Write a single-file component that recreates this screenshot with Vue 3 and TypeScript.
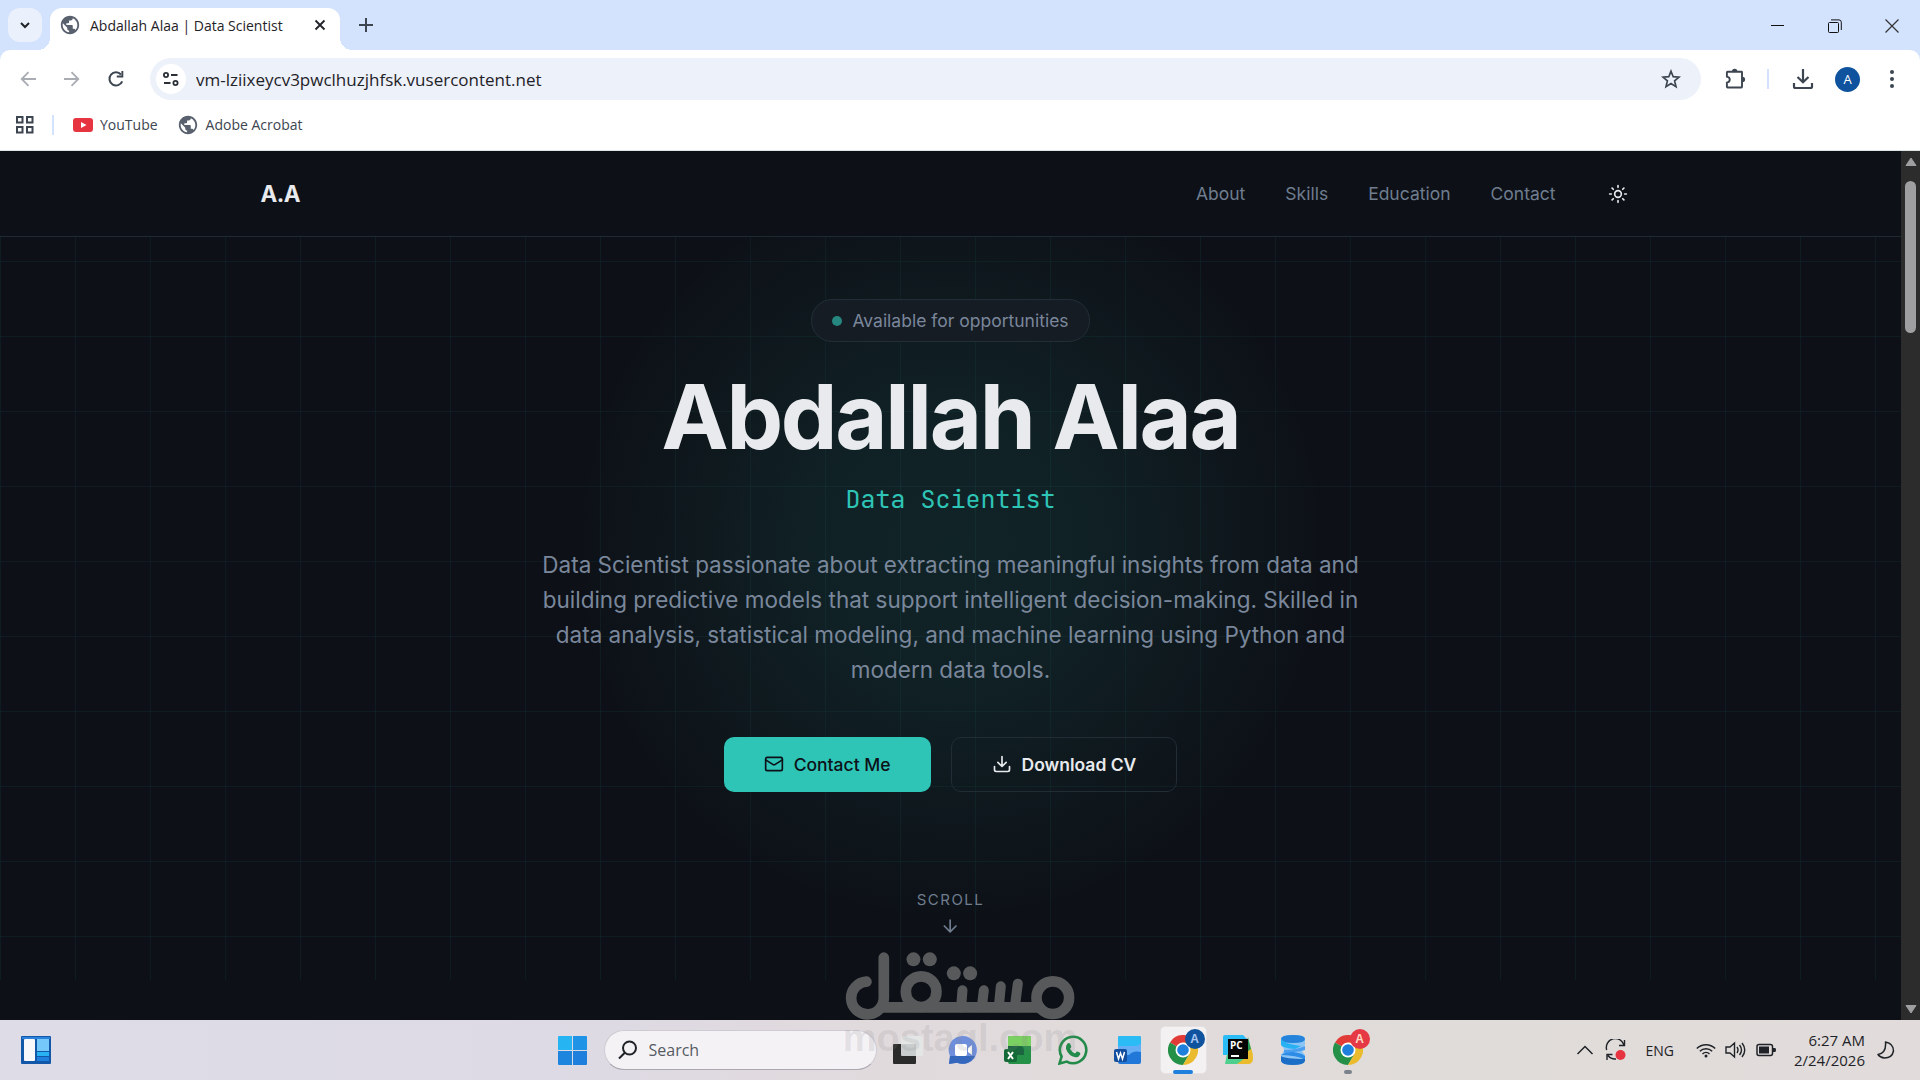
<script setup lang="ts">
import { ref } from 'vue'

const address = ref('vm-lziixeycv3pwclhuzjhfsk.vusercontent.net')
const query = ref('')
const links = ['About', 'Skills', 'Education', 'Contact']
const globe =
  'M12 2C6.48 2 2 6.48 2 12s4.48 10 10 10 10-4.48 10-10S17.52 2 12 2zm-1 17.93c-3.95-.49-7-3.85-7-7.93 0-.62.08-1.21.21-1.79L9 15v1c0 1.1.9 2 2 2v1.93zm6.9-2.54c-.26-.81-1-1.39-1.9-1.39h-1v-3c0-.55-.45-1-1-1H8v-2h2c.55 0 1-.45 1-1V7h2c1.1 0 2-.9 2-2v-.41c2.93 1.19 5 4.06 5 7.41 0 2.08-.8 3.97-2.1 5.39z'
const browsers = [
  { label: 'Chrome, work profile', badge: '#0f539f', letter: '#a9c6f0', active: true },
  { label: 'Chrome, personal profile', badge: '#e63946', letter: '#ffd9c4', active: false },
]
</script>

<template>
  <div class="desktop">
    <header class="browser">
      <div class="strip">
        <button class="tab-search" aria-label="Search tabs">
          <svg width="12" height="12" viewBox="0 0 12 12"><path d="M2 4l4 4 4-4" fill="none" stroke="#1f2328" stroke-width="2" /></svg>
        </button>
        <div class="tab">
          <svg class="fav" width="22" height="22" viewBox="0 0 24 24"><path :d="globe" fill="#59616e" /></svg>
          <span class="tab-title">Abdallah Alaa | Data Scientist</span>
          <button class="bare tab-close" aria-label="Close tab">
            <svg width="12" height="12" viewBox="0 0 12 12"><path d="M1.500 1.500l9 9M10.500 1.500l-9 9" stroke="#1f2328" stroke-width="1.800" /></svg>
          </button>
        </div>
        <button class="bare new-tab" aria-label="New tab">
          <svg width="14" height="14" viewBox="0 0 14 14"><path d="M7 0v14M0 7h14" stroke="#3c4550" stroke-width="2" /></svg>
        </button>
        <div class="window-buttons">
          <button class="bare" aria-label="Minimize"><svg width="14" height="14" viewBox="0 0 14 14"><path d="M0 6.500h13" stroke="#111" /></svg></button>
          <button class="bare" aria-label="Restore"><svg width="14" height="14" viewBox="0 0 14 14" fill="none" stroke="#111"><rect x=".5" y="3.500" width="10" height="10" rx="1" /><path d="M3 .9h8q2.300 0 2.300 2.300V11" /></svg></button>
          <button class="bare" aria-label="Close"><svg width="14" height="14" viewBox="0 0 14 14"><path d="M.5 .5l13 13M13.500 .5l-13 13" stroke="#333" stroke-width="1.200" /></svg></button>
        </div>
      </div>

      <div class="toolbar">
        <button class="bare tool" aria-label="Back"><svg width="16" height="16" viewBox="0 0 16 16" fill="none" stroke="#a9adb3" stroke-width="1.800"><path d="M16 8H2M8.500 1.200L1.700 8l6.800 6.800" /></svg></button>
        <button class="bare tool" aria-label="Forward"><svg width="16" height="16" viewBox="0 0 16 16" fill="none" stroke="#a9adb3" stroke-width="1.800"><path d="M0 8h14M7.500 1.200L14.300 8l-6.800 6.800" /></svg></button>
        <button class="bare tool" aria-label="Reload"><svg width="18" height="18" viewBox="0 0 18 18"><path d="M15.200 11.300A6.600 6.600 0 1 1 14 4.500" fill="none" stroke="#3c4550" stroke-width="2" /><path d="M16.300 1v6.500H9.800V5.600h4.600V1z" fill="#3c4550" /></svg></button>
        <div class="omnibox">
          <button class="site-info" aria-label="Site information"><svg width="18" height="18" viewBox="0 0 18 18" fill="none" stroke="#2b3038" stroke-width="1.800"><circle cx="4" cy="5" r="2.100" /><path d="M9 5h6.500M2 13h6.500" /><circle cx="13.500" cy="13" r="2.100" /></svg></button>
          <input v-model="address" class="address" aria-label="Address" spellcheck="false" />
          <button class="bare star" aria-label="Bookmark"><svg width="20" height="20" viewBox="0 0 20 20"><path d="M10 2.200l2.200 5.500 5.900.4-4.500 3.800 1.400 5.700-5-3.100-5 3.100 1.400-5.700-4.500-3.800 5.900-.4z" fill="none" stroke="#3c4550" stroke-width="1.700" /></svg></button>
        </div>
        <button class="bare tool ext" aria-label="Extensions"><svg width="22" height="22" viewBox="0 0 22 22"><path d="M3.500 3.700H17.500Q18 3.700 18 4.200V18.800Q18 19.500 17.300 19.500H3.600Q2.900 19.500 2.900 18.800V14.600C6.700 14 6.700 9.200 2.900 8.600V4.400Q2.900 3.700 3.500 3.700Z" fill="none" stroke="#3c4550" stroke-width="1.900" /><path d="M8 3.500a2.700 2.700 0 0 1 5.400 0zM18.400 8.700a2.700 2.700 0 0 1 0 5.400z" fill="#3c4550" /></svg></button>
        <i class="rule"></i>
        <button class="bare tool dl" aria-label="Downloads"><svg width="22" height="22" viewBox="0 0 22 22" fill="none" stroke="#3c4550" stroke-width="2.200"><path d="M11 1v13M5.500 9L11 14.300 16.500 9M2 15v3.500q0 1.500 1.500 1.500h15q1.500 0 1.500-1.500V15" /></svg></button>
        <button class="avatar" aria-label="Profile">A</button>
        <button class="bare tool menu" aria-label="Menu"><svg width="6" height="20" viewBox="0 0 6 20" fill="#3c4550"><circle cx="3" cy="3" r="2" /><circle cx="3" cy="10" r="2" /><circle cx="3" cy="17" r="2" /></svg></button>
      </div>

      <nav class="bookmarks" aria-label="Bookmarks">
        <button class="bare" aria-label="Apps"><svg width="20" height="20" viewBox="0 0 20 20" fill="none" stroke="#3c4550" stroke-width="2"><path d="M2 2h5.500v5.500H2zM12 2h5.500v5.500H12zM2 12h5.500v5.500H2zM12 12h5.500v5.500H12z" /></svg></button>
        <i class="rule"></i>
        <a href="#youtube"><svg width="20" height="14" viewBox="0 0 20 14"><rect width="20" height="14" rx="3" fill="#e63440" /><path d="M8 4l5.500 3L8 10z" fill="#fff" /></svg>YouTube</a>
        <a href="#acrobat"><svg class="fav" width="22" height="22" viewBox="0 0 24 24"><path :d="globe" fill="#59616e" /></svg>Adobe Acrobat</a>
      </nav>
    </header>

    <main class="viewport">
      <div class="page">
        <header class="site-header">
          <div class="container">
            <a class="logo" href="#top">A.A</a>
            <nav class="site-nav" aria-label="Sections">
              <a v-for="l in links" :key="l" :href="'#' + l.toLowerCase()">{{ l }}</a>
              <button class="bare theme" aria-label="Toggle theme">
                <svg class="lucide" width="16" height="16" viewBox="0 0 24 24"><circle cx="12" cy="12" r="4" /><path d="M12 2v2M12 20v2M4.930 4.930l1.410 1.410M17.660 17.660l1.410 1.410M2 12h2M20 12h2M6.340 17.660l-1.410 1.410M19.070 4.930l-1.410 1.410" /></svg>
              </button>
            </nav>
          </div>
        </header>
        <section id="top" class="hero">
          <p class="pill"><i class="dot"></i>Available for opportunities</p>
          <h1>Abdallah Alaa</h1>
          <p class="role">Data Scientist</p>
          <p class="intro">Data Scientist passionate about extracting meaningful insights from data and building predictive models that support intelligent decision-making. Skilled in data analysis, statistical modeling, and machine learning using Python and modern data tools.</p>
          <div class="actions">
            <a class="btn primary" href="#contact"><svg class="lucide" width="16" height="16" viewBox="0 0 24 24"><rect x="2" y="4" width="20" height="16" rx="2" /><path d="M22 7l-8.970 5.700a1.940 1.940 0 0 1-2.060 0L2 7" /></svg>Contact Me</a>
            <a class="btn outline" href="#cv"><svg class="lucide" width="16" height="16" viewBox="0 0 24 24"><path d="M12 15V3M21 15v4a2 2 0 0 1-2 2H5a2 2 0 0 1-2-2v-4M7 10l5 5 5-5" /></svg>Download CV</a>
          </div>
          <a class="scroll-hint" href="#about">SCROLL<svg class="lucide" width="16" height="16" viewBox="0 0 24 24"><path d="M12 5v14M19 12l-7 7-7-7" /></svg></a>
        </section>
      </div>
      <div class="scrollbar" aria-hidden="true">
        <svg width="12" height="10" viewBox="0 0 12 10"><path d="M6 1l5 7.500H1z" fill="#9f9fa2" stroke="#9f9fa2" stroke-linejoin="round" /></svg>
        <i class="thumb"></i>
        <svg width="12" height="10" viewBox="0 0 12 10"><path d="M6 9l5-7.500H1z" fill="#9f9fa2" stroke="#9f9fa2" stroke-linejoin="round" /></svg>
      </div>
    </main>

    <footer class="taskbar">
      <div class="side">
        <button class="bare" aria-label="Widgets">
          <svg width="30" height="28" viewBox="0 0 30 28"><rect width="30" height="28" rx="1" fill="#1257a8" /><rect x="1" y="1" width="28" height="2" fill="#2c83dc" /><rect x="3" y="3" width="11" height="22" rx="1" fill="#f8f8fb" /><rect x="16" y="3" width="12" height="12" fill="#74c8fa" /><rect x="16" y="16" width="12" height="4" fill="#29b2f3" /><rect x="16" y="21" width="12" height="4" fill="#1e7fdd" /></svg>
        </button>
      </div>
      <div class="apps">
        <button class="bare app" aria-label="Start">
          <svg width="29" height="29" viewBox="0 0 29 29"><path d="M0 1q0-1 1-1h13v14H0z" fill="#27b4f2" /><path d="M15 0h13q1 0 1 1v13H15z" fill="#1f93e6" /><path d="M0 15h14v14H1q-1 0-1-1z" fill="#1e85df" /><path d="M15 15h14v13q0 1-1 1H15z" fill="#1e7fdd" /></svg>
        </button>
        <label class="search">
          <svg width="20" height="20" viewBox="0 0 20 20" fill="none" stroke="#1f2328" stroke-width="2"><circle cx="11.500" cy="8" r="6.500" /><path d="M6.800 12.700L1 18.500" /></svg>
          <input v-model="query" placeholder="Search" aria-label="Search" />
        </label>
        <button class="bare app" aria-label="Task view">
          <svg width="30" height="30" viewBox="0 0 30 30"><rect x="0" y="9" width="23" height="20" rx="1" fill="#2b2b2b" /><rect x="8" y="1" width="22" height="20" rx="1" fill="#e4e8e8" opacity=".86" /></svg>
        </button>
        <button class="bare app" aria-label="Meeting">
          <svg width="30" height="30" viewBox="0 0 30 30"><path d="M15 1a14 14 0 1 1-6 26.700L1 29l1-8A14 14 0 0 1 15 1z" fill="#6f8fdd" /><path d="M2 21h25a14 14 0 0 1-18 6.700L1 29z" fill="#3567bd" /><rect x="7" y="9" width="12" height="12" rx="2" fill="#fff" /><path d="M20 13l4-3v10l-4-3z" fill="#fff" /></svg>
        </button>
        <button class="bare app" aria-label="Excel">
          <svg width="30" height="30" viewBox="0 0 30 30"><rect x="5" y="1" width="23" height="28" rx="2" fill="#259048" /><path d="M5 11V3q0-2 2-2h19q2 0 2 2v8z" fill="#7bd062" /><path d="M5 11h12q4 0 4 5v4H5z" fill="#1b6640" /><rect x="1" y="14" width="13" height="13" rx="2" fill="#146a36" /><path d="M5 17l5 7M10 17l-5 7" stroke="#fff" stroke-width="2" /></svg>
        </button>
        <button class="bare app" aria-label="WhatsApp">
          <svg width="30" height="30" viewBox="0 0 30 30"><path d="M1.500 28.500L3.600 21.500A13.200 13.200 0 1 1 8.800 26.600z" fill="none" stroke="#238b49" stroke-width="2.600" /><path d="M9.500 8.500q1-1 2.500 0l1.300 3q.2.700-1.300 2.200 2 3.500 5 4.800l1.800-1.900q.7-.3 3.200 1.200.5.500.2 1.600-1.500 3.200-5 2.800-6.500-1.200-9.200-8.200-.5-3.500 1.500-5.500z" fill="#238b49" /></svg>
        </button>
        <button class="bare app" aria-label="Word">
          <svg width="30" height="30" viewBox="0 0 30 30"><rect x="5" y="1" width="23" height="28" rx="2" fill="#2178d9" /><path d="M5 11V3q0-2 2-2h19q2 0 2 2v8z" fill="#2bbcf6" /><path d="M5 20v-9h16q7 0 7-4v10q-8-2-12 3z" fill="#65adf4" /><rect x="1" y="14" width="13" height="13" rx="2" fill="#134f9e" /><path d="M3.500 17l2 7 2-6 2 6 2-7" fill="none" stroke="#fff" stroke-width="1.500" /></svg>
        </button>
        <button v-for="(b, i) in browsers" :key="b.label" class="bare app" :class="{ active: b.active, last: i === 1 }" :aria-label="b.label">
          <svg width="30" height="30" viewBox="0 0 30 30"><path d="M15 15L2 7.500A15 15 0 0 1 28 7.500z" fill="#e23a36" /><path d="M15 15L2 7.500A15 15 0 0 0 15 30l6.500-11z" fill="#259048" /><path d="M28 7.500H15l6.500 11.300L15 30A15 15 0 0 0 28 7.500z" fill="#eabb2c" /><circle cx="15" cy="15" r="7.500" fill="#fff" /><circle cx="15" cy="15" r="5.800" fill="#1e7fdd" /></svg>
          <span class="badge" :style="{ background: b.badge, color: b.letter }">A</span>
          <i class="running"></i>
        </button>
        <button class="bare app" aria-label="PyCharm">
          <svg width="30" height="30" viewBox="0 0 30 30"><path d="M0 2q0-2 2-2h18l4 4v4L6 20H0z" fill="#2bbcf6" /><path d="M24 6q6 8 6 17 0 6-5 6H14z" fill="#eabb2c" /><path d="M25 2l3 12-6 4z" fill="#249a55" /><path d="M4 19L2 29h12l8-6z" fill="#4dcf8d" /><rect x="5" y="4" width="20" height="20" fill="#050505" /><rect x="8" y="20" width="8" height="2" fill="#fff" /><text x="7" y="14" fill="#fff" font-size="10" font-weight="700" font-family="Open Sans, sans-serif">PC</text></svg>
        </button>
        <button class="bare app" aria-label="Database">
          <svg width="26" height="30" viewBox="0 0 26 30"><path d="M1 4q0-4 12-4t12 4v6q-3 3-3 5t3 5v6q-1 4-12 4T1 26v-6q3-3 3-5t-3-5z" fill="#8cc4f5" /><path d="M1 4q0-4 12-4t12 4q0 4-12 4T1 4z" fill="#2583dc" /><path d="M1 4q3 5 20 7l-6 3Q3 13 1 10z" fill="#29b2f3" /><path d="M25 11q-8 4-21 4v3q15-1 21-3z" fill="#4a9ff0" /><path d="M1 20q4-3 12-3 9 1 12 4v5q-2-5-24-6z" fill="#2c8ce6" /><path d="M1 21q4 3 24 3v2q-1 4-12 4T1 26z" fill="#1b6ec5" /></svg>
        </button>
      </div>
      <div class="side tray">
        <button class="bare" aria-label="Hidden icons"><svg width="18" height="12" viewBox="0 0 18 12"><path d="M1.500 10L9 2.500l7.500 7.500" fill="none" stroke="#1f2328" stroke-width="1.500" /></svg></button>
        <button class="bare sync" aria-label="Updates"><svg width="22" height="22" viewBox="0 0 22 22" fill="none" stroke="#1f2328" stroke-width="1.400"><path d="M1.700 11A9 9 0 0 1 19 6M19.500 1v5.500H14M2 21v-5.500h5.500M3 16.500a9 9 0 0 0 8 3.500" /><circle cx="15.500" cy="16" r="5" fill="#e63440" stroke="none" /></svg></button>
        <span class="lang">ENG</span>
        <button class="bare status" aria-label="Network, volume and battery">
          <svg width="20" height="20" viewBox="0 0 20 20" fill="none" stroke="#1f2328" stroke-width="1.500"><path d="M.8 8.500a13 13 0 0 1 18.400 0M3.800 11.300a9 9 0 0 1 12.400 0M6.500 14a5 5 0 0 1 7 0" /><circle cx="10" cy="16" r="1.500" fill="#1f2328" stroke="none" /></svg>
          <svg width="22" height="20" viewBox="0 0 22 20" fill="none" stroke="#1f2328" stroke-width="1.400"><path d="M1 7h4l4.500-4v14L5 13H1zM12 7q2 3 0 6M14.500 5q4 5 0 10M17 3q5.500 7 0 14" /></svg>
          <svg width="20" height="14" viewBox="0 0 20 14"><rect x="1" y="1.500" width="15.500" height="11" rx="2" fill="none" stroke="#1f2328" stroke-width="1.500" /><rect x="3" y="3.500" width="10" height="7" fill="#1f2328" /><path d="M17 5h2q1 0 1 2t-1 2h-2z" fill="#1f2328" /></svg>
        </button>
        <time class="clock" datetime="2026-02-24T06:27">6:27 AM<br />2/24/2026</time>
        <button class="bare" aria-label="Do not disturb"><svg width="18" height="18" viewBox="0 0 18 18"><path d="M8.500 1q8 1.500 8 9-1.500 7-9 7-4.500-.5-6.500-3.500Q9.500 12 8.500 1z" fill="none" stroke="#1f2328" stroke-width="1.500" stroke-linejoin="round" /></svg></button>
      </div>
    </footer>

    <div class="watermark">
      <svg role="img" aria-label="مستقل" width="230" height="68" viewBox="135 65 690 204" fill="none" stroke="#58595b" stroke-width="32" stroke-linecap="round">
        <path d="M200 154A49 49 0 1 0 252 203V82M245 231H715" />
        <circle cx="364" cy="184" r="46" />
        <circle cx="759" cy="202" r="49" />
        <path d="M488 180L484 231M552 180L546 231M603 168L597 231M654 160L645 231" stroke-width="30" />
        <g fill="#58595b" stroke="none"><circle cx="341" cy="87" r="21" /><circle cx="390" cy="87" r="21" /><circle cx="462" cy="129" r="21" /><circle cx="511" cy="129" r="21" /></g>
      </svg>
      <span>mostaql.com</span>
    </div>
  </div>
</template>

<style>
html, body { margin: 0; background: #0d1117; }
</style>

<style scoped>
.desktop {
  position: relative;
  display: flex;
  flex-direction: column;
  height: 100vh;
  overflow: hidden;
  font-family: "Segoe UI", "Open Sans", "Noto Sans", sans-serif;
  color: #1f2328;
}
.desktop * { box-sizing: border-box; }
svg { display: block; flex: none; }
p, h1 { margin: 0; }
a { color: inherit; text-decoration: none; }
input { border: 0; outline: 0; background: none; padding: 0; font-family: inherit; color: inherit; min-width: 0; }
input::placeholder { color: #555b62; opacity: 1; }
.bare { border: 0; background: none; padding: 0; color: inherit; display: flex; align-items: center; justify-content: center; }

/* Browser frame */
.browser { background: #d3e2fd; flex: none; }
.strip { display: flex; align-items: flex-end; height: 50px; padding-left: 8px; }
.tab-search { width: 34px; height: 34px; margin: 0 8px 8px 0; border: 0; padding: 0; border-radius: 12px; background: #ebf1fc; display: flex; align-items: center; justify-content: center; }
.tab { position: relative; display: flex; align-items: center; width: 290px; height: 42px; padding: 0 14px 8px 9px; border-radius: 12px 12px 0 0; background: #fff; font-size: 14px; }
.tab::before, .tab::after { content: ""; position: absolute; bottom: 0; width: 12px; height: 12px; }
.tab::before { right: 100%; background: radial-gradient(circle at 0 0, transparent 12px, #fff 12px); }
.tab::after { left: 100%; background: radial-gradient(circle at 100% 0, transparent 12px, #fff 12px); }
.tab-title { flex: 1; margin-left: 9px; white-space: nowrap; }
.new-tab { width: 36px; height: 50px; margin-left: 8px; }
.window-buttons { display: flex; margin-left: auto; height: 48px; }
.window-buttons button { width: 57px; }
.toolbar { display: flex; align-items: center; height: 58px; padding: 0 16px 0 6px; border-radius: 10px 10px 0 0; background: #fff; }
.tool { width: 44px; height: 44px; }
.omnibox { display: flex; align-items: center; flex: 1; height: 42px; margin-left: 12px; padding: 0 20px 0 6px; border-radius: 21px; background: #edf1fa; }
.site-info { display: flex; align-items: center; justify-content: center; width: 30px; height: 30px; padding: 0; border: 0; border-radius: 50%; background: #fff; }
.address { flex: 1; margin-left: 10px; font-size: 17px; }
.ext { margin: 0 10px 0 12px; }
.rule { width: 2px; height: 20px; background: #d3e2fd; flex: none; }
.dl { margin: 0 0 0 12px; }
.avatar { width: 25px; height: 25px; margin: 0 10px; border: 0; padding: 0; border-radius: 50%; background: #0f539f; color: #fff; font: 13px/25px "Open Sans", sans-serif; }
.menu { width: 44px; margin-right: -10px; }
.bookmarks { display: flex; align-items: center; height: 43px; padding: 0 15px 9px; border-bottom: 1px solid #dce6e4; background: #fff; font-size: 14px; color: #3c4550; }
.bookmarks .rule { margin: 0 19px 0 17px; }
.bookmarks a { display: flex; align-items: center; gap: 7px; margin-right: 19px; }

/* Portfolio page, shown at the browser's 125% zoom */
.viewport { display: flex; flex: 1; min-height: 0; background: #0d1117; }
.page { position: relative; flex: 1; min-width: 0; zoom: 1.25; overflow: hidden; font-family: Inter, sans-serif; color: #e8eaed; }
.site-header { position: absolute; z-index: 1; top: 0; left: 0; right: 0; background: #0d1117; border-bottom: 1px solid #1e2a32; }
.container { display: flex; align-items: center; justify-content: space-between; max-width: 1152px; height: 68px; margin: 0 auto; padding: 0 24px; }
.logo { font-size: 18px; font-weight: 700; letter-spacing: -0.025em; }
.site-nav { display: flex; align-items: center; gap: 32px; font-size: 14px; color: #6f7d8f; }
.theme { width: 36px; height: 36px; color: #e8eaed; }
.lucide { fill: none; stroke: currentColor; stroke-width: 2; stroke-linecap: round; stroke-linejoin: round; }
.hero {
  position: relative;
  display: flex;
  flex-direction: column;
  align-items: center;
  justify-content: center;
  height: 100%;
  margin-top: -32px;
  text-align: center;
  background:
    linear-gradient(to right, rgba(46, 196, 182, 0.06) 1px, transparent 1px) 0 0 / 60px 60px,
    linear-gradient(to bottom, rgba(46, 196, 182, 0.06) 1px, transparent 1px) 0 0 / 60px 60px,
    radial-gradient(circle 300px at center, rgba(46, 196, 182, 0.1) 0%, rgba(46, 196, 182, 0.09) 35%, rgba(46, 196, 182, 0.04) 70%, rgba(46, 196, 182, 0) 100%);
}
.pill { display: flex; align-items: center; gap: 8px; height: 34px; padding: 0 16px; border: 1px solid #222e37; border-radius: 17px; background: #161c24; font-size: 14px; color: #7a879b; }
.dot { width: 8px; height: 8px; border-radius: 50%; background: #25877f; }
h1 { margin-top: 24px; font-size: 72px; line-height: 72px; font-weight: 700; letter-spacing: -0.025em; }
.role { margin-top: 16px; font: 20px/28px "JetBrains Mono", "DejaVu Sans Mono", monospace; color: #2ec4b6; }
.intro { max-width: 672px; margin-top: 24px; font-size: 18px; line-height: 28px; color: #7a879b; }
.actions { display: flex; gap: 16px; margin-top: 40px; }
.btn { display: flex; align-items: center; gap: 8px; height: 44px; padding: 0 32px; border-radius: 8px; font-size: 14px; font-weight: 500; }
.outline { border: 1px solid #222c35; font-weight: 600; }
.primary { background: #2ec4b6; color: #0d1117; }
.scroll-hint { position: absolute; bottom: 35px; left: 50%; transform: translateX(-50%); display: flex; flex-direction: column; align-items: center; gap: 5px; font-size: 12px; line-height: 16px; letter-spacing: 0.1em; color: #6f7d8f; }
.scrollbar { display: flex; flex-direction: column; align-items: center; justify-content: space-between; width: 19px; padding: 6px 0; background: #2c2c2c; }
.thumb { width: 11px; height: 152px; margin: 14px 0 auto; border-radius: 6px; background: #9f9fa2; }

/* Taskbar */
.taskbar { display: grid; grid-template-columns: 1fr auto 1fr; align-items: center; flex: none; height: 60px; background: linear-gradient(90deg, #dddce7 0%, #dddae5 28%, #e1dadd 45%, #e0dcd9 75%, #e1dcdb 100%); }
.side { display: flex; align-items: center; padding-left: 21px; }
.apps { display: flex; align-items: center; height: 60px; }
.app { position: relative; width: 55px; height: 60px; }
.search { display: flex; align-items: center; gap: 11px; width: 273px; height: 40px; margin: 0 4px; padding: 0 13px; border: 1px solid #cfcbd2; border-bottom-color: #aaa7b0; border-radius: 20px; background: #f5f2f6; }
.search input { flex: 1; font-size: 16px; }
.badge { position: absolute; top: 9px; right: 6px; width: 20px; height: 20px; border-radius: 50%; font-size: 12px; line-height: 20px; font-weight: 600; }
.active::before { content: ""; position: absolute; inset: 6px 4px; border: 1px solid #e6e2e3; border-radius: 5px; background: #f4f1f2; }
.active svg { position: relative; }
.last { order: 3; }
.running { position: absolute; bottom: 6px; left: 50%; width: 8px; height: 4px; margin-left: -4px; border-radius: 2px; background: #7c828c; }
.active .running { width: 20px; margin-left: -10px; background: #1e7fdd; }
.tray { justify-content: flex-end; padding: 0 25px 0 0; }
.sync { margin-left: 11px; }
.lang { margin: 0 22px 0 18px; font-size: 14px; }
.status { gap: 9px; }
.clock { margin: 0 12px 0 18px; font-size: 15px; line-height: 20px; text-align: right; }

/* Site mark laid over the window */
.watermark { position: absolute; top: 952px; left: 50%; transform: translateX(-50%); display: flex; flex-direction: column; align-items: center; pointer-events: none; }
.watermark span { font: 700 38px/36px "Liberation Sans", sans-serif; color: rgba(130, 130, 135, 0.16); }
</style>
